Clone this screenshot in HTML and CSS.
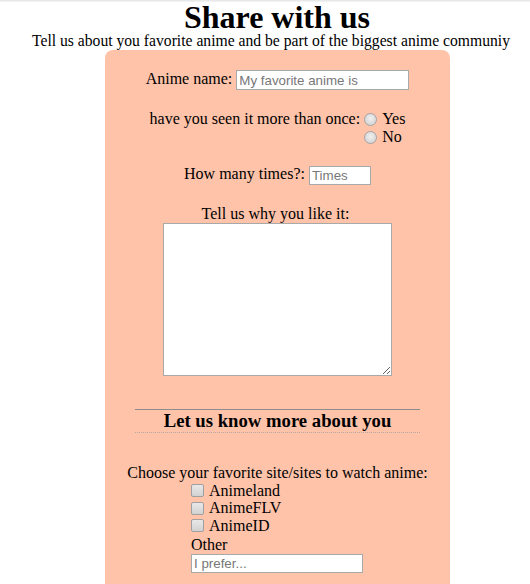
FILE: index.html
```html
<!DOCTYPE html>
<html>
<head>
<meta charset="utf-8">
<link rel="stylesheet" href="styles.css">
</head>
<body>
<div class="topline"></div>
<h1 class="title">Share with us</h1>
<p class="subtitle">Tell us about you favorite anime and be part of the biggest anime communiy</p>
<form class="panel">
  <div class="row row-name">
    <label>Anime name: </label><input class="text name" type="text" placeholder="My favorite anime is">
  </div>
  <div class="row row-seen">
    <span class="q">have you seen it more than once:</span>
    <span class="radios">
      <label class="opt"><input class="radio" type="radio" name="seen"> Yes</label>
      <label class="opt"><input class="radio" type="radio" name="seen"> No</label>
    </span>
  </div>
  <div class="row row-times">
    <label>How many times?: </label><input class="text times" type="text" placeholder="Times">
  </div>
  <div class="row row-why">
    <label class="why-label">Tell us why you like it:</label>
    <textarea class="why"></textarea>
  </div>
  <h3 class="more">Let us know more about you</h3>
  <div class="row row-choose">Choose your favorite site/sites to watch anime:</div>
  <div class="sites">
    <label class="site"><input class="check" type="checkbox"> Animeland</label>
    <label class="site"><input class="check" type="checkbox"> AnimeFLV</label>
    <label class="site"><input class="check" type="checkbox"> AnimeID</label>
    <div class="other">Other</div>
    <input class="text prefer" type="text" placeholder="I prefer...">
  </div>
</form>
</body>
</html>
```
FILE: styles.css
```css
html, body {
  margin: 0;
  padding: 0;
  background: #ffffff;
  font-family: "Liberation Serif", "Times New Roman", serif;
  font-size: 16px;
  color: #000;
}
.topline {
  height: 2px;
  background: linear-gradient(#e4e4e4, #f6f6f6);
}
.title {
  margin: 0;
  padding-left: 24px;
  text-align: center;
  font-size: 32px;
  line-height: 30px;
  font-weight: bold;
}
.subtitle {
  margin: 0;
  padding-left: 12px;
  text-align: center;
  font-size: 15.65px;
  line-height: 18px;
}
.panel {
  margin: 0 0 0 105px;
  width: 345px;
  height: 560px;
  background: #ffc3aa;
  border-radius: 8px 8px 0 0;
  padding-top: 19px;
  box-sizing: border-box;
}
.row {
  text-align: center;
  line-height: 18px;
}
.row-name {
  line-height: 20px;
}
.text {
  font-family: "Liberation Sans", Arial, sans-serif;
  font-size: 13.33px;
  border: 1px solid #a9a9a9;
  padding: 1px 2px;
  height: 19px;
  box-sizing: border-box;
  background: #fff;
  vertical-align: middle;
  margin: 0;
  outline: none;
}
.text::placeholder {
  color: #777;
}
.name {
  width: 173px;
  height: 20px;
}
.row-seen {
  margin-top: 20px;
  display: flex;
  justify-content: center;
  align-items: flex-start;
}
.radios {
  display: inline-flex;
  flex-direction: column;
  text-align: left;
  margin-left: 4px;
}
.opt {
  display: flex;
  align-items: center;
  height: 18px;
}
.radio {
  appearance: none;
  -webkit-appearance: none;
  width: 13px;
  height: 13px;
  margin: 0 5px 0 0;
  border-radius: 50%;
  border: 1px solid #a4a4a4;
  background: radial-gradient(circle at 50% 40%, #f0f0f0, #cdcdcd);
  box-sizing: border-box;
}
.row-times {
  margin-top: 19px;
}
.times {
  width: 62px;
}
.row-why {
  margin-top: 20px;
}
.why-label {
  display: block;
  padding-right: 4px;
}
.why {
  display: block;
  margin: 0 auto;
  width: 229px;
  height: 153px;
  border: 1px solid #a9a9a9;
  box-sizing: border-box;
  padding: 2px;
  resize: both;
  background: #fff;
}
.more {
  margin: 33px 30px 0 30px;
  border-top: 1px solid #8c8c8c;
  border-bottom: 1px dotted #b8a89e;
  text-align: center;
  font-size: 18.7px;
  line-height: 22px;
  padding: 0;
}
.row-choose {
  margin-top: 31px;
}
.sites {
  margin-left: 86px;
  display: flex;
  flex-direction: column;
  align-items: flex-start;
}
.site {
  display: flex;
  align-items: center;
  height: 17.5px;
}
.check {
  appearance: none;
  -webkit-appearance: none;
  width: 13px;
  height: 13px;
  margin: 0 5px 0 0;
  border-radius: 2px;
  border: 1px solid #a0a0a0;
  background: linear-gradient(#e8e8e8, #d2d2d2);
  box-sizing: border-box;
}
.other {
  line-height: 18px;
  margin-top: 1px;
}
.prefer {
  width: 172px;
}
```
